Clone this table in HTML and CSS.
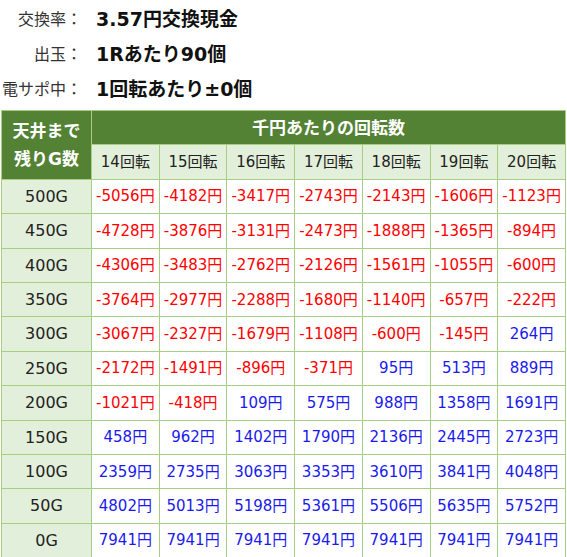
FILE: index.html
```html
<!DOCTYPE html>
<html lang="ja">
<head>
<meta charset="utf-8">
<title>天井期待値</title>
<link rel="stylesheet" href="styles.css">
</head>
<body>
<div class="info">
  <span class="label">交換率：</span><span class="value">3.57円交換現金</span>
  <span class="label">出玉：</span><span class="value">1Rあたり90個</span>
  <span class="label">電サポ中：</span><span class="value">1回転あたり±0個</span>
</div>
<table class="rate">
  <colgroup><col class="col-g"><col class="col-n" span="7"></colgroup>
  <thead>
    <tr><th class="corner" rowspan="2">天井まで<br>残りG数</th><th class="title" colspan="7">千円あたりの回転数</th></tr>
    <tr><th class="sub">14回転</th><th class="sub">15回転</th><th class="sub">16回転</th><th class="sub">17回転</th><th class="sub">18回転</th><th class="sub">19回転</th><th class="sub">20回転</th></tr>
  </thead>
  <tbody>
    <tr><th class="g">500G</th><td class="neg">-5056円</td><td class="neg">-4182円</td><td class="neg">-3417円</td><td class="neg">-2743円</td><td class="neg">-2143円</td><td class="neg">-1606円</td><td class="neg">-1123円</td></tr>
    <tr><th class="g">450G</th><td class="neg">-4728円</td><td class="neg">-3876円</td><td class="neg">-3131円</td><td class="neg">-2473円</td><td class="neg">-1888円</td><td class="neg">-1365円</td><td class="neg">-894円</td></tr>
    <tr><th class="g">400G</th><td class="neg">-4306円</td><td class="neg">-3483円</td><td class="neg">-2762円</td><td class="neg">-2126円</td><td class="neg">-1561円</td><td class="neg">-1055円</td><td class="neg">-600円</td></tr>
    <tr><th class="g">350G</th><td class="neg">-3764円</td><td class="neg">-2977円</td><td class="neg">-2288円</td><td class="neg">-1680円</td><td class="neg">-1140円</td><td class="neg">-657円</td><td class="neg">-222円</td></tr>
    <tr><th class="g">300G</th><td class="neg">-3067円</td><td class="neg">-2327円</td><td class="neg">-1679円</td><td class="neg">-1108円</td><td class="neg">-600円</td><td class="neg">-145円</td><td class="pos">264円</td></tr>
    <tr><th class="g">250G</th><td class="neg">-2172円</td><td class="neg">-1491円</td><td class="neg">-896円</td><td class="neg">-371円</td><td class="pos">95円</td><td class="pos">513円</td><td class="pos">889円</td></tr>
    <tr><th class="g">200G</th><td class="neg">-1021円</td><td class="neg">-418円</td><td class="pos">109円</td><td class="pos">575円</td><td class="pos">988円</td><td class="pos">1358円</td><td class="pos">1691円</td></tr>
    <tr><th class="g">150G</th><td class="pos">458円</td><td class="pos">962円</td><td class="pos">1402円</td><td class="pos">1790円</td><td class="pos">2136円</td><td class="pos">2445円</td><td class="pos">2723円</td></tr>
    <tr><th class="g">100G</th><td class="pos">2359円</td><td class="pos">2735円</td><td class="pos">3063円</td><td class="pos">3353円</td><td class="pos">3610円</td><td class="pos">3841円</td><td class="pos">4048円</td></tr>
    <tr><th class="g">50G</th><td class="pos">4802円</td><td class="pos">5013円</td><td class="pos">5198円</td><td class="pos">5361円</td><td class="pos">5506円</td><td class="pos">5635円</td><td class="pos">5752円</td></tr>
    <tr><th class="g">0G</th><td class="pos">7941円</td><td class="pos">7941円</td><td class="pos">7941円</td><td class="pos">7941円</td><td class="pos">7941円</td><td class="pos">7941円</td><td class="pos">7941円</td></tr>
  </tbody>
</table>
</body>
</html>
```
FILE: styles.css
```css
body {
  margin: 0;
  background: #fff;
  font-family: "DejaVu Sans", "Noto Sans CJK JP", sans-serif;
  color: #222;
}

.info {
  display: grid;
  grid-template-columns: 82px auto;
  grid-auto-rows: 35px;
  column-gap: 14px;
  align-items: center;
  margin-bottom: 5px;
}

.label {
  text-align: right;
  font-size: 16px;
  color: #333;
  white-space: nowrap;
}

.value {
  font-size: 19px;
  font-weight: bold;
  color: #111;
  white-space: nowrap;
}

.rate {
  border-collapse: collapse;
  table-layout: fixed;
  width: 565px;
  margin-left: 1px;
}

.col-g { width: 90px; }

.rate tr { height: 34.4px; }

.rate th,
.rate td {
  border: 1px solid #a6cf84;
  padding: 0;
  text-align: center;
  white-space: nowrap;
  line-height: 1.2;
}

.corner {
  background: #548235;
  color: #fff;
  font-size: 17px;
  font-weight: bold;
  line-height: 28px !important;
}

.title {
  background: #548235;
  color: #fff;
  font-size: 17px;
  font-weight: bold;
}

.sub {
  background: #e2efda;
  font-size: 15px;
  font-weight: normal;
  color: #222;
}

.g {
  background: #e2efda;
  font-size: 16px;
  font-weight: normal;
  color: #222;
}

.rate td {
  font-size: 15px;
  background: #fff;
}

.neg { color: #ff0000; }
.pos { color: #1a1aee; }
```
